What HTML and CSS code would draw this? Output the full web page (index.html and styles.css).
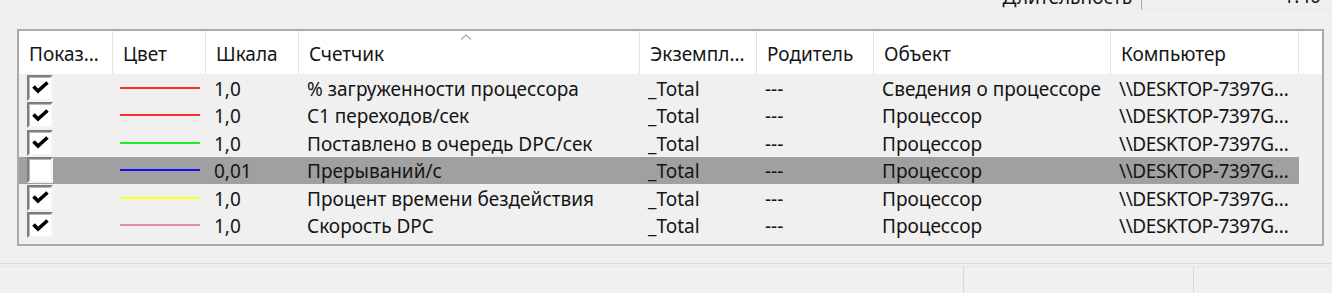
FILE: index.html
```html
<!DOCTYPE html>
<html lang="ru">
<head>
    <meta charset="UTF-8">
    <title>Счетчики</title>
    <link rel="stylesheet" href="styles.css">
</head>
<body>
    <div class="duration">
        <span class="duration-label">Длительность</span>
        <div class="duration-box">1:40</div>
    </div>

    <div class="listview">
        <div class="lv-header">
            <div class="hcell">Показ…</div>
            <div class="hcell">Цвет</div>
            <div class="hcell">Шкала</div>
            <div class="hcell sorted">Счетчик
                <svg class="sort-arrow" width="12" height="6" viewBox="0 0 12 6"><polyline points="1,5.5 6,1 11,5.5" fill="none" stroke="#a8a8a8" stroke-width="1.2"/></svg>
            </div>
            <div class="hcell">Экземпл…</div>
            <div class="hcell">Родитель</div>
            <div class="hcell">Объект</div>
            <div class="hcell">Компьютер</div>
            <div class="hcell filler"></div>
        </div>

        <div class="lv-body" id="rows"></div>
    </div>

    <div class="statusbar">
        <div class="panel"></div>
        <div class="panel"></div>
        <div class="panel last"></div>
    </div>

    <script>
        const counters = [
            { show: true,  color: '#ff2b2b', scale: '1,0',  name: '% загруженности процессора', object: 'Сведения о процессоре' },
            { show: true,  color: '#ff2b2b', scale: '1,0',  name: 'C1 переходов/сек',            object: 'Процессор' },
            { show: true,  color: '#22ee22', scale: '1,0',  name: 'Поставлено в очередь DPC/сек', object: 'Процессор' },
            { show: false, color: '#1010ee', scale: '0,01', name: 'Прерываний/с',                object: 'Процессор', selected: true },
            { show: true,  color: '#ffff22', scale: '1,0',  name: 'Процент времени бездействия',  object: 'Процессор' },
            { show: true,  color: '#e48ab4', scale: '1,0',  name: 'Скорость DPC',                object: 'Процессор' }
        ];

        const check = '<svg width="17" height="13" viewBox="0 0 17 13"><polyline points="1.5,5.5 6,10 15.5,1.5" fill="none" stroke="#000" stroke-width="3.6"/></svg>';

        document.getElementById('rows').innerHTML = counters.map(c => `
            <div class="row${c.selected ? ' selected' : ''}">
                <div class="cell"><span class="checkbox">${c.show ? check : ''}</span></div>
                <div class="cell"><span class="swatch" style="background:${c.color}"></span></div>
                <div class="cell">${c.scale}</div>
                <div class="cell">${c.name}</div>
                <div class="cell">_Total</div>
                <div class="cell">---</div>
                <div class="cell">${c.object}</div>
                <div class="cell computer">\\\\DESKTOP-7397G…</div>
            </div>
        `).join('');
    </script>
</body>
</html>
```

FILE: styles.css
```css
body {
    margin: 0;
    background: #f0f0f0;
    font-family: "Noto Sans", "Open Sans", sans-serif;
    font-size: 19px;
    color: #151515;
    width: 1332px;
    height: 293px;
    overflow: hidden;
}
.duration {
    display: flex;
    justify-content: flex-end;
    align-items: flex-end;
    height: 26px;
    margin-top: -16px;
    gap: 9px;
}
.duration-label {
    line-height: 26px;
}
.duration-box {
    width: 191px;
    height: 26px;
    box-sizing: border-box;
    border-left: 1px solid #a6a6a6;
    border-bottom: 1px solid #e6e6e6;
    text-align: right;
    padding-right: 11px;
    line-height: 24px;
}
.listview {
    margin: 19px 0 0 17px;
    width: 1307px;
    height: 217px;
    box-sizing: border-box;
    border: 2px solid #aaaaaa;
    background: #f0f0f0;
}
.lv-header {
    display: grid;
    grid-template-columns: 94px 93px 93px 341px 117px 117px 237px 188px 1fr;
    height: 43px;
    background: #fff;
}
.hcell {
    position: relative;
    display: flex;
    align-items: center;
    padding: 3px 0 0 10px;
    border-right: 1px solid #e5e5e5;
    white-space: nowrap;
    overflow: hidden;
}
.hcell.filler {
    border-right: none;
}
.sort-arrow {
    position: absolute;
    top: 3px;
    left: 161px;
}
.row {
    display: grid;
    grid-template-columns: 94px 93px 93px 341px 117px 117px 237px 188px;
    height: 27.5px;
    align-items: center;
    width: 1280px;
}
.row.selected {
    background: #a0a0a0;
}
.cell {
    padding-left: 8px;
    white-space: nowrap;
    overflow: hidden;
    display: flex;
    align-items: center;
    padding-top: 2px;
}
.cell.computer {
    letter-spacing: -0.4px;
}
.checkbox {
    width: 26px;
    height: 26px;
    box-sizing: border-box;
    background: #fff;
    border-style: solid;
    border-width: 2px;
    border-color: #7e7e7e #f4f4f4 #f4f4f4 #7e7e7e;
    box-shadow: inset 1px 1px 0 #b8b8b8;
    display: flex;
    align-items: center;
    justify-content: center;
    margin-top: -2px;
}
.checkbox svg {
    display: block;
    margin-left: 1px;
}
.swatch {
    display: block;
    width: 80px;
    height: 2px;
    margin-left: -1px;
    margin-top: -2px;
}
.statusbar {
    margin-top: 17px;
    border-top: 1px solid #dcdcdc;
    display: grid;
    grid-template-columns: 964px 230px 1fr;
    height: 29px;
}
.panel {
    border-top: 1px solid #e6e6e6;
    margin-top: 2px;
    border-right: 1px solid #d8d8d8;
}
.panel.last {
    border-right: none;
}
```
